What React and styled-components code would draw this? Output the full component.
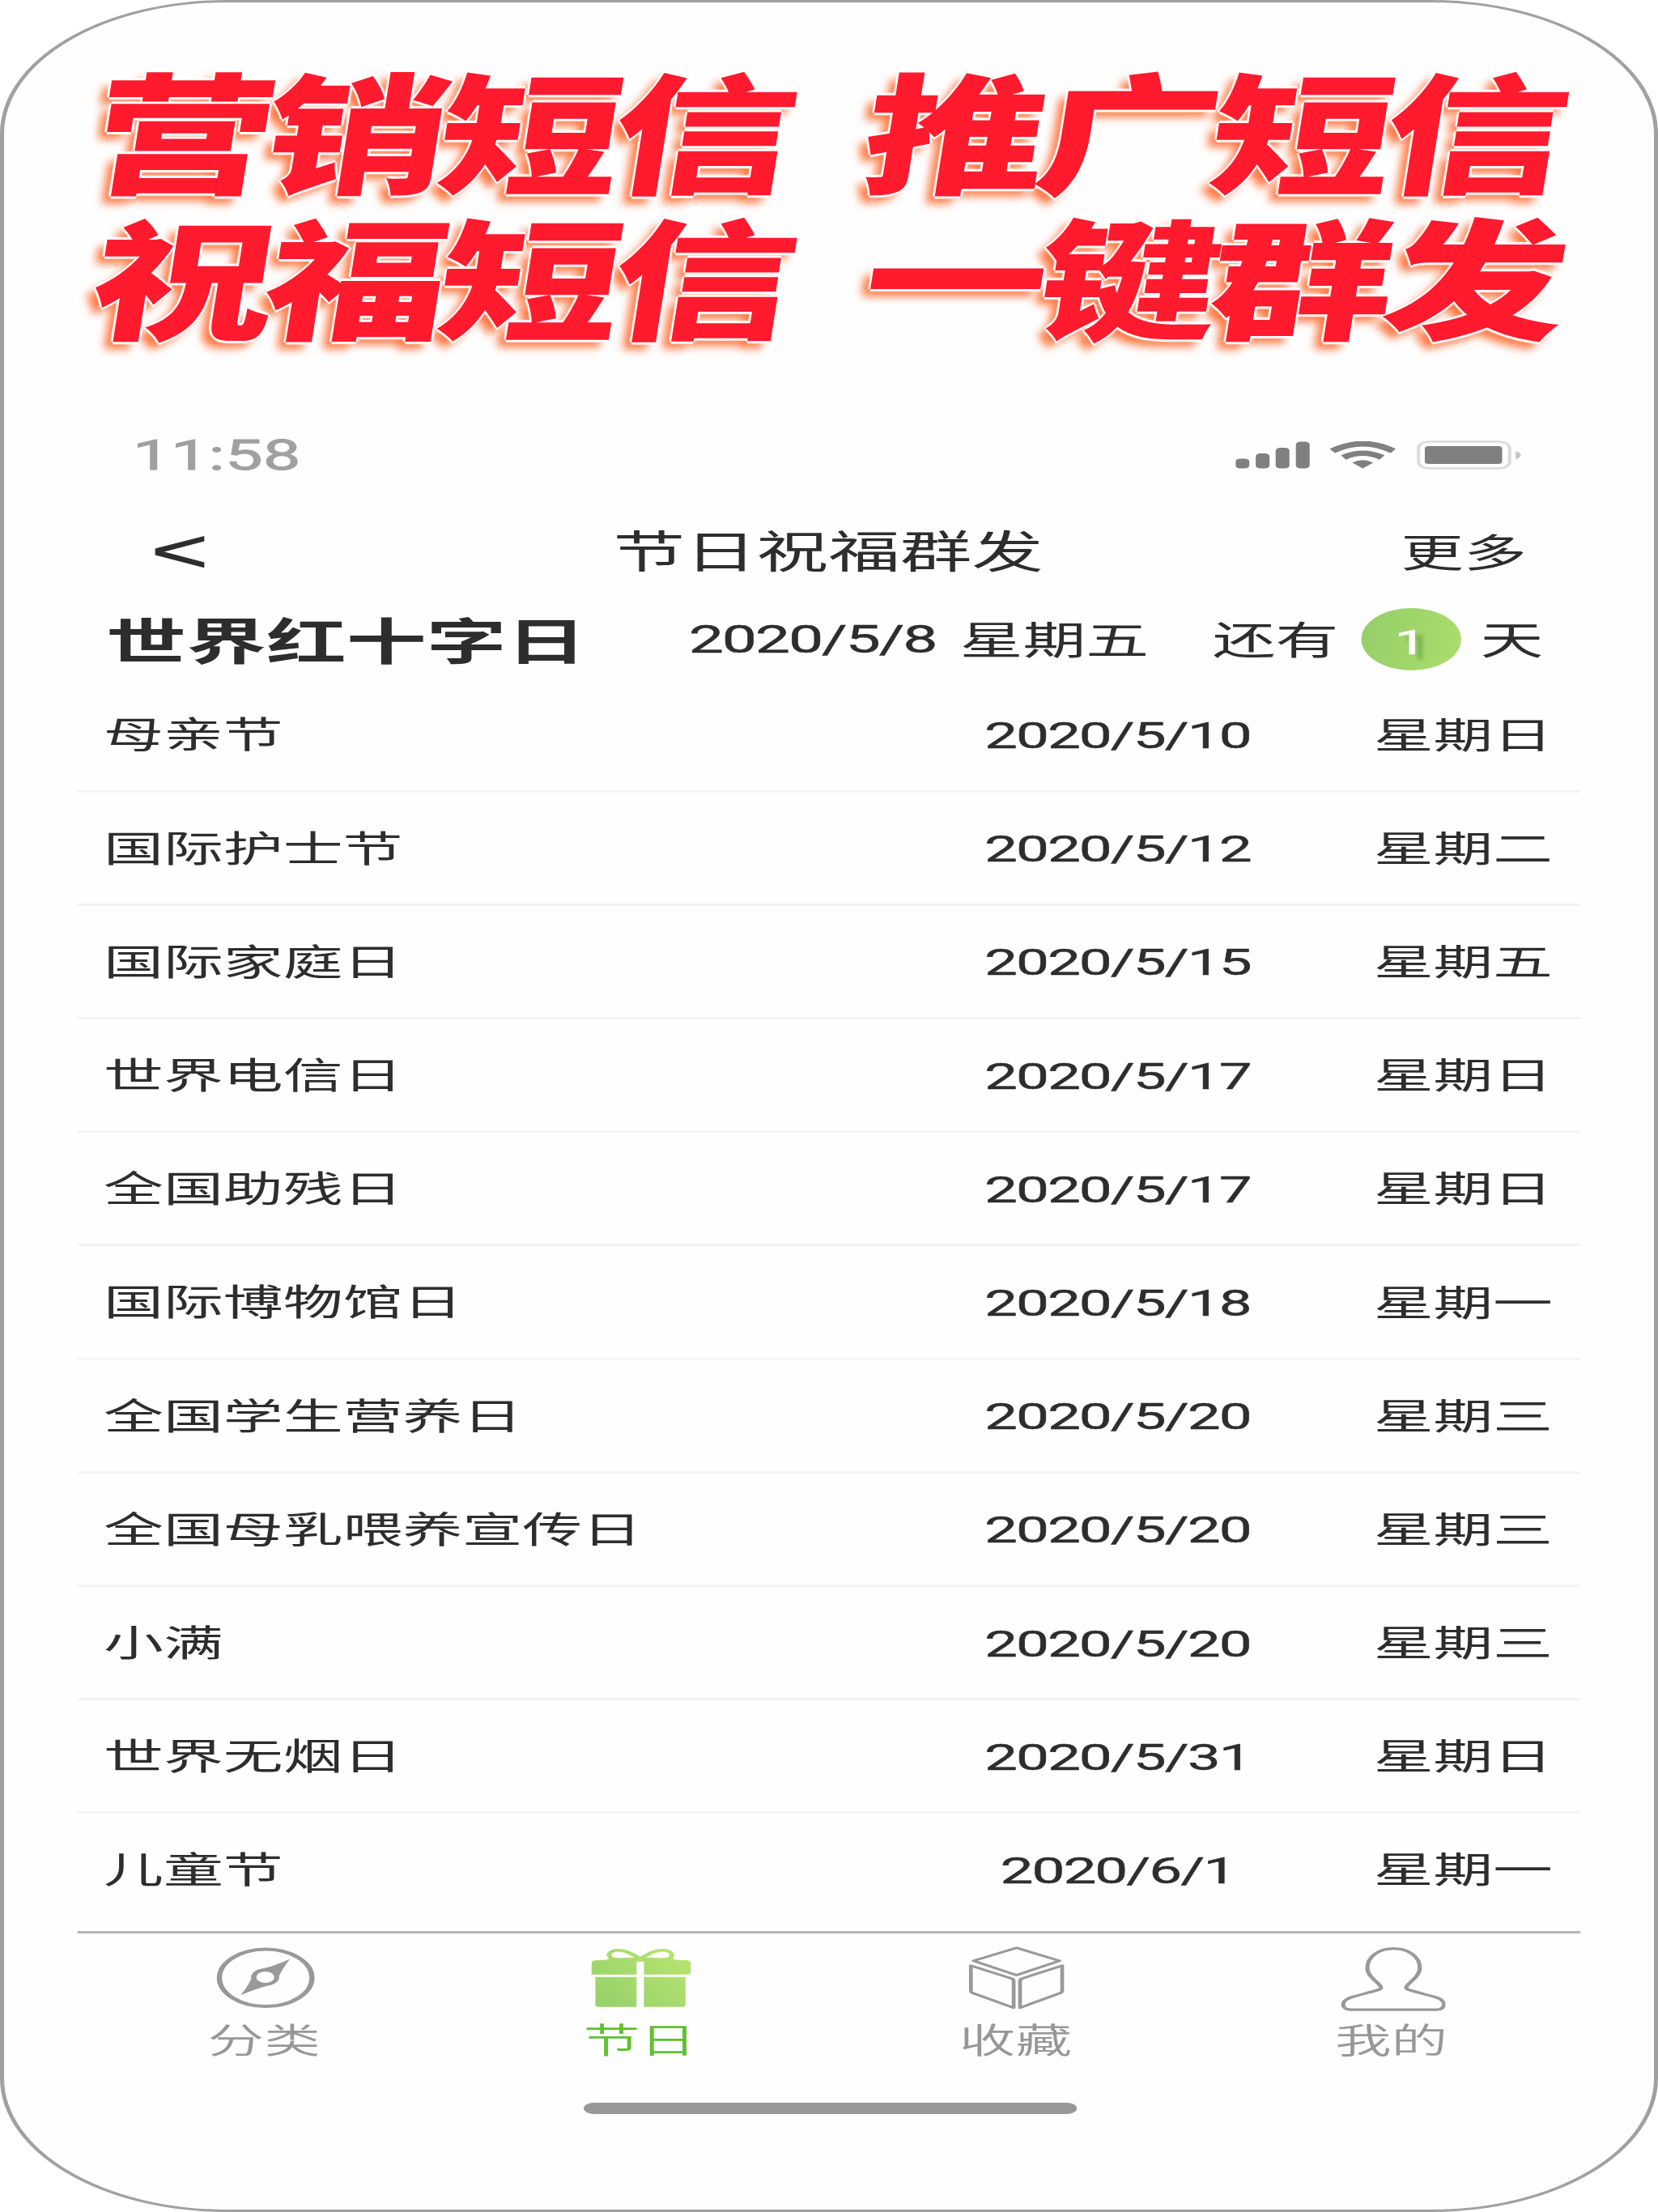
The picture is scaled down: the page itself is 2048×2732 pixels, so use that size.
import styled, { createGlobalStyle } from "styled-components";

const slogans = [
  ["营销短信", "推广短信"],
  ["祝福短信", "一键群发"],
];

const festivals = [
  { name: "母亲节", date: "2020/5/10", weekday: "星期日" },
  { name: "国际护士节", date: "2020/5/12", weekday: "星期二" },
  { name: "国际家庭日", date: "2020/5/15", weekday: "星期五" },
  { name: "世界电信日", date: "2020/5/17", weekday: "星期日" },
  { name: "全国助残日", date: "2020/5/17", weekday: "星期日" },
  { name: "国际博物馆日", date: "2020/5/18", weekday: "星期一" },
  { name: "全国学生营养日", date: "2020/5/20", weekday: "星期三" },
  { name: "全国母乳喂养宣传日", date: "2020/5/20", weekday: "星期三" },
  { name: "小满", date: "2020/5/20", weekday: "星期三" },
  { name: "世界无烟日", date: "2020/5/31", weekday: "星期日" },
  { name: "儿童节", date: "2020/6/1", weekday: "星期一" },
];

const tabs = [
  { label: "分类", Icon: CompassIcon },
  { label: "节日", Icon: GiftIcon, active: true },
  { label: "收藏", Icon: BoxIcon },
  { label: "我的", Icon: PersonIcon },
];

export default function App() {
  return (
    <>
      <GlobalStyle />
      <Phone>
        <Banner>
          {slogans.map((words) => (
            <Slogan key={words[0]}>
              {words.map((word) => (
                <span key={word}>{word}</span>
              ))}
            </Slogan>
          ))}
        </Banner>

        <Screen>
          <StatusBar>
            <Clock>11:58</Clock>
            <StatusIcons>
              <SignalIcon />
              <WifiIcon />
              <BatteryIcon />
            </StatusIcons>
          </StatusBar>

          <NavBar>
            <Back>&lt;</Back>
            <Text $size={54.7}>节日祝福群发</Text>
            <More $size={48}>更多</More>
          </NavBar>

          <NextFestival>
            <Text $size={61} $weight={700}>
              世界红十字日
            </Text>
            <Digits $size={47.5}>2020/5/8</Digits>
            <Text $size={48}>星期五</Text>
            <Text $size={48}>还有</Text>
            <DaysLeft>1</DaysLeft>
            <Text $size={48}>天</Text>
          </NextFestival>

          <List>
            {festivals.map(({ name, date, weekday }) => (
              <Row key={name}>
                <Text $size={45.6}>{name}</Text>
                <RowDate $size={45}>{date}</RowDate>
                <Text $size={45.4}>{weekday}</Text>
              </Row>
            ))}
          </List>

          <TabBar>
            {tabs.map(({ label, Icon, active }) => (
              <Tab key={label} $active={active}>
                <Icon />
                <TabLabel $size={43} $weight={350}>
                  {label}
                </TabLabel>
              </Tab>
            ))}
          </TabBar>

          <HomeIndicator />
        </Screen>
      </Phone>
    </>
  );
}

function SignalIcon() {
  return (
    <svg width="57" height="34" viewBox="0 0 57 34" fill="#808080">
      <rect x="0" y="21.5" width="10.5" height="12" rx="3.5" />
      <rect x="15.4" y="15" width="10.5" height="18.5" rx="3.5" />
      <rect x="30.6" y="8" width="10.5" height="25.5" rx="3.5" />
      <rect x="46" y="0.5" width="10.5" height="33" rx="3.5" />
    </svg>
  );
}

function WifiIcon() {
  return (
    <svg width="50" height="34" viewBox="0 0 50 34" fill="none">
      <path d="M1.8 12 Q25 -6 48.2 12" stroke="#808080" strokeWidth="6.6" />
      <path d="M10.3 20 Q25 9.5 39.7 20" stroke="#808080" strokeWidth="6.6" />
      <path d="M17 26.5 Q25 20 33 26.5 L25 33.5 Z" fill="#808080" />
    </svg>
  );
}

function BatteryIcon() {
  return (
    <svg width="80" height="36" viewBox="0 0 80 36">
      <rect x="1.5" y="1.5" width="69.5" height="33" rx="8" fill="none" stroke="#dcdcdc" strokeWidth="2.6" />
      <rect x="6.3" y="7" width="59" height="22" rx="3" fill="#808080" />
      <path d="M75.5 13 Q79.5 14.5 79.5 18 Q79.5 21.5 75.5 23 Z" fill="#c8c8c8" />
    </svg>
  );
}

function CompassIcon() {
  return (
    <svg width="80" height="80" viewBox="0 0 80 80">
      <circle cx="40.5" cy="38.8" r="35.3" fill="none" stroke="#999" strokeWidth="4" />
      <path
        d="M59 15.5 Q53.5 27 50.7 36.5 A10.9 10.9 0 0 1 42 48.4 Q33.5 52 21.5 60 Q27 49 29.5 40 A10.9 10.9 0 0 1 38.5 27.3 Q47.5 24 59 15.5 Z"
        fill="#999"
      />
      <circle cx="40.2" cy="38" r="6.9" fill="#fefefe" />
    </svg>
  );
}

function GiftIcon() {
  return (
    <svg width="80" height="80" viewBox="0 0 80 80">
      <defs>
        <linearGradient id="gift" x1="0" y1="76" x2="80" y2="10" gradientUnits="userSpaceOnUse">
          <stop offset="0" stopColor="#93cf6b" />
          <stop offset="1" stopColor="#b9e56f" />
        </linearGradient>
      </defs>
      <g fill="url(#gift)">
        <path d="M36.3 18.7 V34.7 H2 V21 Q2 17 6 17 H12 L16 15 H64 L67 17 H73.7 Q77.7 17 77.7 21 V31.5 Q77.7 34.7 74.5 34.7 H41.9 V18.7 Z" />
        <path d="M4.9 37.7 H36.3 V74.7 H7.5 Q4.9 74.7 4.9 72 Z" />
        <path d="M41.9 37.7 H73.6 V72 Q73.6 74.7 71 74.7 H41.9 Z" />
      </g>
      <g fill="#fefefe" stroke="url(#gift)" strokeWidth="3.6">
        <path d="M39.1 15.3 C33 9.5 28 4.7 22.6 4.7 C15.5 4.7 13 11.5 18 15.2 C24 17 33 15.5 39.1 15.3 Z" />
        <path d="M39.1 15.3 C45 9.5 50 4.7 56 4.7 C63 4.7 65.5 11.5 61 15.2 C55 17 46 15.5 39.1 15.3 Z" />
      </g>
    </svg>
  );
}

function BoxIcon() {
  return (
    <svg width="80" height="80" viewBox="0 0 80 80" fill="none" stroke="#999" strokeWidth="2.9" strokeLinejoin="round">
      <path d="M40 1.7 L72.8 17.7 L40 35.5 L7.2 17.7 Z" />
      <path d="M5.2 23.7 L36 39.5 Q37.8 40.5 37.8 42.5 V75.7 L6.5 57.5 Q5.2 56.5 5.2 55 Z" />
      <path d="M74.8 23.7 L44.5 39.5 Q42.7 40.5 42.7 42.5 V75.7 L73.5 57.5 Q74.8 56.5 74.8 55 Z" />
    </svg>
  );
}

function PersonIcon() {
  return (
    <svg width="80" height="80" viewBox="0 0 80 80" fill="none" stroke="#999" strokeWidth="3.2">
      <path d="M40.5 2.6 C29 2.6 20.5 13 20.5 26.5 C20.5 36 27 42.5 30 48 C31.5 51 31 52.5 29 53.5 C22 57 14 60 8 63 C0 67 0 78 8.5 78.2 H72.5 C81 78 81 67 73 63 C67 60 59 57 52 53.5 C50 52.5 49.5 51 51 48 C54 42.5 60.5 36 60.5 26.5 C60.5 13 52 2.6 40.5 2.6 Z" />
    </svg>
  );
}

const GlobalStyle = createGlobalStyle`
  * {
    box-sizing: border-box;
  }

  body {
    margin: 0;
    background: #ffffff;
  }
`;

const Phone = styled.div`
  width: 2048px;
  height: 2732px;
  display: flex;
  flex-direction: column;
  border: solid #a0a0a0;
  border-width: 3px 5px;
  border-radius: 280px / 165px;
  background: #fefefe;
  overflow: hidden;
`;

const Banner = styled.header`
  height: 497px;
  flex-shrink: 0;
  padding: 64px 0 0 112px;
`;

const Slogan = styled.div`
  width: max-content;
  height: 180px;
  display: flex;
  gap: 69px;
  font-family: "Noto Sans CJK SC", sans-serif;
  font-size: 161px;
  font-weight: 900;
  line-height: 180px;
  letter-spacing: -8px;
  white-space: nowrap;
  color: #ff1a2e;
  text-shadow:
    2px 0 1px #ffffff,
    -2px 0 1px #ffffff,
    0 3px 1px #ffffff,
    0 -3px 1px #ffffff,
    -7px 9px 9px #ff7a45;
  transform: skewX(-9deg) scaleX(1.4);
  transform-origin: left center;
`;

/* The app screen is drawn at its own width and widened to fill the frame */
const Screen = styled.main`
  width: 1258px;
  flex: 1;
  display: flex;
  flex-direction: column;
  transform: scaleX(1.62);
  transform-origin: left top;
  color: #2d2d2d;
`;

/* The bottom padding lifts the glyphs to the middle of the line */
const Text = styled.span`
  padding-bottom: 0.08em;
  font-family: "Noto Sans CJK SC", sans-serif;
  font-size: ${({ $size }) => $size}px;
  font-weight: ${({ $weight }) => $weight || 400};
  line-height: 1;
  white-space: nowrap;
`;

const Digits = styled.span`
  padding-top: 3px;
  font-family: Roboto, sans-serif;
  font-size: ${({ $size }) => $size}px;
  line-height: 1;
  letter-spacing: -0.028em;
  white-space: nowrap;
  -webkit-text-stroke: 0.4px currentColor;
`;

const StatusBar = styled.div`
  height: 123px;
  flex-shrink: 0;
  display: flex;
  justify-content: space-between;
  align-items: center;
  padding: 0 101.5px 0 98px;
`;

const Clock = styled.span`
  padding-top: 2px;
  font-family: Roboto, sans-serif;
  font-size: 51.5px;
  line-height: 1;
  color: #a0a0a0;
  -webkit-text-stroke: 0.9px #a0a0a0;
`;

const StatusIcons = styled.div`
  display: flex;
  align-items: center;
  gap: 15.5px;
`;

const NavBar = styled.nav`
  height: 116px;
  flex-shrink: 0;
  display: grid;
  grid-template-columns: 1fr auto 1fr;
  align-items: center;
  padding: 0 97px 0 96px;
`;

const Back = styled.span`
  padding: 0 0 2px 16px;
  font-family: "Liberation Sans", sans-serif;
  font-size: 75px;
  line-height: 1;
  -webkit-text-stroke: 1px #2d2d2d;
`;

const More = styled(Text)`
  justify-self: end;
`;

const NextFestival = styled.section`
  height: 98.5px;
  flex-shrink: 0;
  display: grid;
  grid-template-columns: 444px 206.8px 192.6px 113.6px 90.7px auto;
  align-items: center;
  padding: 2px 0 0 78px;

  & > :first-child {
    padding-bottom: 0.04em;
  }
`;

const DaysLeft = styled.span`
  width: 76.5px;
  height: 76.5px;
  display: flex;
  justify-content: center;
  align-items: center;
  padding: 9px 2px 0 0;
  border-radius: 50%;
  background: linear-gradient(100deg, #94ce69, #abdd6c);
  font-family: Roboto, sans-serif;
  font-size: 43px;
  line-height: 1;
  color: #ffffff;
  -webkit-text-stroke: 0.6px #ffffff;
  text-shadow: 6px 6px 4px rgba(80, 130, 40, 0.45);
`;

const List = styled.section`
  height: 1547px;
  flex-shrink: 0;
  padding: 1px 56px 0;
`;

const Row = styled.div`
  height: 140.2px;
  display: grid;
  grid-template-columns: 653px 240px auto;
  align-items: center;
  padding-left: 20px;
  border-bottom: 3px solid #f3f3f3;

  &:last-child {
    border-bottom-color: transparent;
  }

  & > :last-child {
    margin-left: 75.5px;
  }
`;

const RowDate = styled(Digits)`
  text-align: center;
`;

const TabBar = styled.footer`
  height: 212.5px;
  flex-shrink: 0;
  display: grid;
  grid-template-columns: repeat(4, 1fr);
  margin: 0 56px;
  padding-top: 16px;
  border-top: 3px solid #b5b7b5;
`;

const Tab = styled.div`
  display: flex;
  flex-direction: column;
  align-items: center;
  color: ${({ $active }) => ($active ? "#5fc12f" : "#979797")};
`;

const TabLabel = styled(Text)`
  margin: 12px 2px 0 0;
`;

const HomeIndicator = styled.div`
  width: 376px;
  height: 14px;
  flex-shrink: 0;
  align-self: center;
  margin-left: 1px;
  border-radius: 8px / 7px;
  background: #979797;
`;
